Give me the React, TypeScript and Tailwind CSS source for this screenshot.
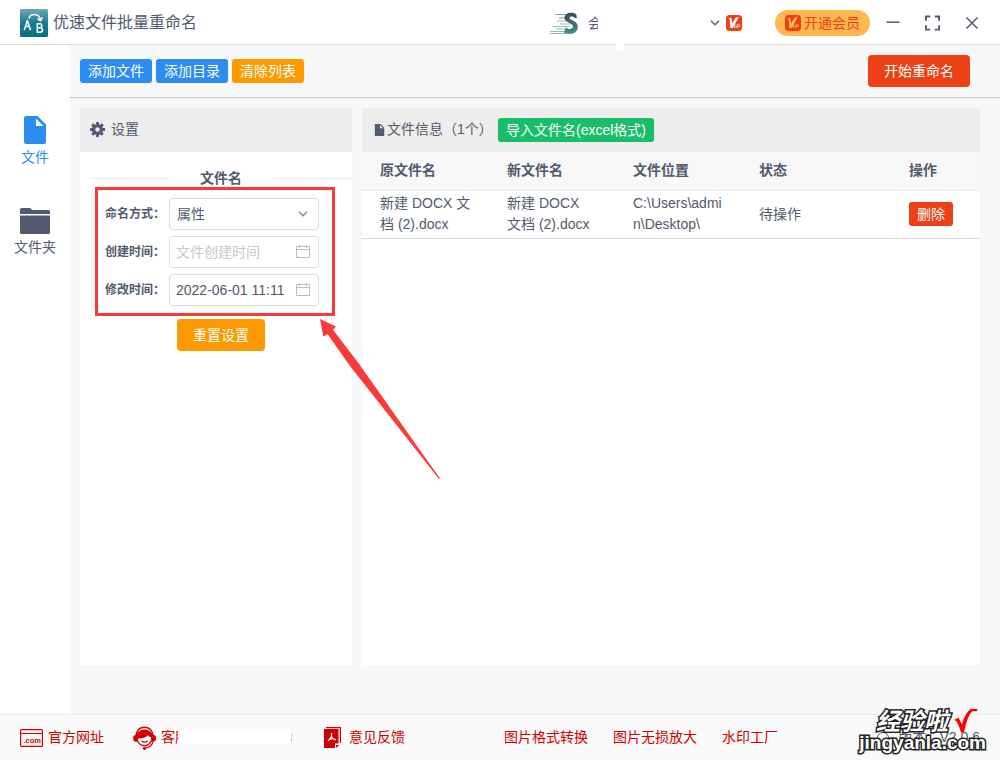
import type { ReactNode } from "react";

const files = [
  {
    source: "新建 DOCX 文档 (2).docx",
    target: "新建 DOCX 文档 (2).docx",
    location: "C:\\Users\\admin\\Desktop\\",
    status: "待操作",
  },
];

const toolLinks = ["图片格式转换", "图片无损放大", "水印工厂"];

function AppLogo() {
  return (
    <svg className="size-7 shrink-0" viewBox="0 0 28 28" aria-hidden="true">
      <defs>
        <linearGradient id="logo-bg" x1="0" y1="0" x2="0" y2="1">
          <stop offset="0" stopColor="#6fa6b5" />
          <stop offset="0.5" stopColor="#177d92" />
          <stop offset="1" stopColor="#087084" />
        </linearGradient>
      </defs>
      <rect width="28" height="28" rx="1.5" fill="url(#logo-bg)" />
      <g fill="none" stroke="#fff" strokeWidth="1.5" strokeLinecap="round" strokeLinejoin="round">
        <path d="M4.400 20.500 7.400 11.500 10.400 20.500M5.500 17.500h3.800" />
        <path d="M17.300 14.800v8.400h3a2.200 2.200 0 0 0 0-4.400h-3M17.300 14.800h2.500a2 2 0 0 1 0 4" />
        <path d="M9 9.200C10.200 4.600 18.500 3.600 20.600 10.600M18 10l2.800 1.800 1.200-2.800" />
      </g>
    </svg>
  );
}

function SpeedLogo() {
  return (
    <svg className="h-[24px] w-[30px] shrink-0" viewBox="0 0 30 24" aria-hidden="true">
      <defs>
        <linearGradient id="speed" x1="0" y1="0" x2="0" y2="1">
          <stop offset="0" stopColor="#354b59" />
          <stop offset="1" stopColor="#438f91" />
        </linearGradient>
      </defs>
      <g strokeWidth="1.2" fill="none">
        <path d="M5 3.500h12M9 7h7" stroke="#8b9aa3" />
        <path d="M7 10h10M10 13h10" stroke="#a9bcc1" />
        <path d="M3 15.500h16M6 18h12" stroke="#96bcbf" />
        <path d="M0 20.500h17M0 22.500h17" stroke="#8cbdbd" />
      </g>
      <path
        d="M26.500 7.500C27.500 4 25.500 1.800 21.500 1.800c-4 0-7 2-7 5.200 0 2.700 2.300 3.800 4.800 5 2 1 3.700 1.800 3.700 3.500 0 1.600-1.600 2.500-3.500 2.500-1.700 0-3-.7-3.500-1.800L14 21.500c1.500 1 3.500 1.400 5.500 1.400 5 0 8.300-2.800 8.300-7 0-3.300-2.300-4.900-4.800-6.100-2-.9-3.500-1.500-3.500-2.700 0-1 .9-1.700 2.200-1.700 1 0 1.800.3 2.100 1.100Z"
        fill="url(#speed)"
      />
    </svg>
  );
}

function VipBadge({ ink }: { ink: string }) {
  return (
    <svg className="size-4 shrink-0" viewBox="0 0 16 16" aria-hidden="true">
      <rect width="16" height="16" rx="3.5" fill="#ed4014" />
      <path d="M2.300 3.200 5.400 2.800 6.100 8.500 9.700 2.500 12.800 2.300 6.800 13H4.400L3.700 4.600Z" fill={ink} />
      <path d="M9 9.500 8.600 13M10.800 13l.4-3.300h1.500a1 1 0 0 1 0 2h-1.500" fill="none" stroke={ink} strokeWidth="1" />
    </svg>
  );
}

function FileIcon({ className }: { className: string }) {
  return (
    <svg className={className} viewBox="0 0 22 28" fill="currentColor" aria-hidden="true">
      <path d="M2 0h11.500L22 8.500V26a2 2 0 0 1-2 2H2a2 2 0 0 1-2-2V2a2 2 0 0 1 2-2Zm10 2.500V10h7.500Z" fillRule="evenodd" />
    </svg>
  );
}

function FolderIcon() {
  return (
    <svg className="h-[26px] w-[30px]" viewBox="0 0 30 26" fill="currentColor" aria-hidden="true">
      <path d="M0 6V1.500Q0 0 1.500 0H10l2.500 2h16Q30 2 30 3.500V6Z" />
      <path d="M0 7.500h30v17q0 1.500-1.500 1.500h-27Q0 26 0 24.500Z" />
    </svg>
  );
}

function GearIcon() {
  return (
    <svg className="size-[15px]" viewBox="0 0 16 16" fill="none" stroke="currentColor" aria-hidden="true">
      <circle cx="8" cy="8" r="4.200" strokeWidth="3.600" />
      <path
        d="M8 0v3M8 13v3M0 8h3M13 8h3M2.300 2.300l2.200 2.200M11.500 11.500l2.200 2.200M2.300 13.700l2.200-2.200M11.500 4.500l2.200-2.200"
        strokeWidth="3"
      />
    </svg>
  );
}

function ChevronIcon({ className }: { className: string }) {
  return (
    <svg className={className} viewBox="0 0 10 6" fill="none" stroke="currentColor" strokeWidth="1.300" aria-hidden="true">
      <path d="m1 .8 4 4 4-4" />
    </svg>
  );
}

function CalendarIcon() {
  return (
    <svg className="pointer-events-none absolute top-[9px] right-[9px] h-[13px] w-[14px] text-[#b9bdc6]" viewBox="0 0 14 13" fill="none" stroke="currentColor" aria-hidden="true">
      <path d="M.5 1.500h13v11H.5ZM.5 4.500h13M3.500 0v3M10.500 0v3" />
    </svg>
  );
}

function WebsiteIcon() {
  return (
    <svg className="h-[18px] w-[23px] shrink-0" viewBox="0 0 23 18" aria-hidden="true">
      <rect x=".6" y=".6" width="21.800" height="16.800" rx="1" fill="none" stroke="currentColor" strokeWidth="1.200" />
      <path d="M1 4.500h21" stroke="currentColor" />
      <text x="3.500" y="14" fontSize="7.500" fontWeight="700" fill="currentColor">.com</text>
    </svg>
  );
}

function SupportIcon() {
  return (
    <svg className="h-[24px] w-[23px] shrink-0" viewBox="0 0 23 24" aria-hidden="true">
      <path d="M3 9C4 3.800 7.500 1.200 11.500 1.200S19 3.800 20 9" fill="none" stroke="currentColor" strokeWidth="1.400" />
      <path
        d="M11.500 3.500C7 3.500 4 6.500 3.500 9H2.200Q0 9.500 0 12.300T2.500 15.800h1.800C5.500 18.500 8 20.300 11.500 20.300s6-1.800 7.200-4.500h1.800Q23 15.300 23 12.300T20.800 9h-1.300C19 6.500 16 3.500 11.500 3.500Zm3.500 5.800c.8 1.400 2 2 3.200 2.200 0 4.200-2.700 7.500-6.700 7.500s-6.700-2.900-6.700-6.500c4.200.1 8.200-.8 10.200-3.200Z"
        fill="currentColor"
        fillRule="evenodd"
      />
      <path d="M8.500 15q3 2.200 6 0M20 16q-1.500 5-7.500 6" fill="none" stroke="currentColor" strokeWidth="1.100" />
      <circle cx="11.500" cy="22.300" r="1.600" fill="currentColor" />
    </svg>
  );
}

function FeedbackIcon() {
  return (
    <svg className="h-[21px] w-[17px] shrink-0" viewBox="0 0 17 21" aria-hidden="true">
      <path d="M2 .6h14.400V16" fill="none" stroke="currentColor" strokeWidth="1.200" />
      <path d="M0 2h14.500v14.500H11V21H0Z" fill="currentColor" />
      <path d="M12 18h3l-3 3Z" fill="currentColor" />
      <path d="M7.500 6v3.500L4 14M7.500 9.500 9 11.500l3 1.500M5.200 12.300 9 11.500" fill="none" stroke="#fff" strokeWidth="1.200" />
    </svg>
  );
}

function Header() {
  return (
    <header className="relative flex h-[45px] shrink-0 items-center border-b border-[#dcdcdc] bg-white pt-px pr-[21px] pl-5">
      <AppLogo />
      <h1 className="ml-[5px] text-base">优速文件批量重命名</h1>
      <div className="ml-auto flex items-center">
        <SpeedLogo />
        <span className="ml-2 w-[10px] overflow-hidden text-sm whitespace-nowrap">会员</span>
        <button type="button" className="ml-[112px] flex items-center gap-[6px]" aria-label="账户">
          <ChevronIcon className="h-[6px] w-[10px]" />
          <VipBadge ink="#ffffff" />
        </button>
      </div>
      <button type="button" className="ml-[33px] flex h-[26px] w-[95px] items-center justify-center gap-[3px] rounded-full bg-[#ffb74f] text-sm text-[#ed4014]">
        <VipBadge ink="#ffb74f" />
        开通会员
      </button>
      <div className="ml-4 flex items-center gap-[25px]">
        <button type="button" aria-label="最小化">
          <svg className="h-4 w-[14px]" viewBox="0 0 14 16" stroke="currentColor" strokeWidth="1.500" aria-hidden="true">
            <path d="M.5 7.200h13" />
          </svg>
        </button>
        <button type="button" aria-label="最大化">
          <svg className="h-4 w-[15px]" viewBox="0 0 16 16" fill="none" stroke="currentColor" strokeWidth="2" aria-hidden="true">
            <path d="M1 5.500V1h4.500M10.500 1H15v4.500M15 10.500V15h-4.500M5.500 15H1v-4.500" />
          </svg>
        </button>
        <button type="button" aria-label="关闭">
          <svg className="h-4 w-[14px]" viewBox="0 0 14 16" fill="none" stroke="currentColor" strokeWidth="1.500" aria-hidden="true">
            <path d="m1.500 2.500 11 11M12.500 2.500l-11 11" />
          </svg>
        </button>
      </div>
      <span className="absolute top-[43px] right-[376px] h-2 w-2 bg-white" />
    </header>
  );
}

function Sidebar() {
  return (
    <nav className="flex w-[70px] shrink-0 flex-col items-center bg-white pt-[71px]">
      <a href="#files" className="flex flex-col items-center gap-[3px] text-[#2d8cf0]">
        <FileIcon className="h-7 w-[22px]" />
        <span>文件</span>
      </a>
      <a href="#folders" className="mt-10 flex flex-col items-center gap-[3px]">
        <FolderIcon />
        <span>文件夹</span>
      </a>
    </nav>
  );
}

function Field({ id, label, children }: { id: string; label: string; children: ReactNode }) {
  return (
    <div className="flex items-center">
      <label htmlFor={id} className="w-16 shrink-0 text-xs font-bold whitespace-nowrap">{label}</label>
      <div className="relative w-[150px]">{children}</div>
    </div>
  );
}

function PointerArrow() {
  return (
    <svg className="pointer-events-none absolute top-[211px] left-[240px] h-[160px] w-[120px]" viewBox="0 0 120 160" aria-hidden="true">
      <path d="M0 0 16 7.500 13 10.800 38 43.500 120 159.500 119 160 30 47 7.500 15 3.300 17.500Z" fill="#fa3939" />
    </svg>
  );
}

function SettingsPanel() {
  return (
    <section className="relative flex w-[272px] shrink-0 flex-col bg-white">
      <h2 className="flex h-11 items-center gap-[6px] bg-[#ededed] px-[10px] pb-px">
        <GearIcon />
        设置
      </h2>
      <div className="mt-[18px] ml-[10px] flex items-center">
        <span className="h-px flex-1 bg-[#e8eaec]" />
        <h3 className="px-[31px] leading-[17px] font-bold">文件名</h3>
        <span className="h-px flex-1 bg-[#e8eaec]" />
      </div>
      <form className="px-[15px]">
        <div className="flex w-60 flex-col gap-[6px] border-[3px] border-[#fa3939] pt-2 pb-[7px] pl-[7px]">
          <Field id="mode" label="命名方式：">
            <select id="mode" className="block h-8 w-full appearance-none rounded-[4px] border border-[#dcdee2] bg-white px-[7px]">
              <option>属性</option>
            </select>
            <ChevronIcon className="pointer-events-none absolute top-[13px] right-[11px] h-[6px] w-[10px] text-[#808695]" />
          </Field>
          <Field id="created" label="创建时间：">
            <input id="created" type="text" placeholder="文件创建时间" className="block h-8 w-full rounded-[4px] border border-[#dcdee2] bg-white pr-6 pl-[6px] placeholder:text-[#c5c8ce]" />
            <CalendarIcon />
          </Field>
          <Field id="modified" label="修改时间：">
            <input id="modified" type="text" defaultValue="2022-06-01 11:11" className="block h-8 w-full rounded-[4px] border border-[#dcdee2] bg-white pr-6 pl-[6px]" />
            <CalendarIcon />
          </Field>
        </div>
        <button type="reset" className="mt-[3px] ml-[82px] block h-8 w-[88px] rounded-[4px] bg-[#ff9900] text-white">重置设置</button>
      </form>
      <PointerArrow />
    </section>
  );
}

function FilesPanel() {
  return (
    <section className="min-w-0 flex-1 bg-white">
      <div className="flex h-11 items-center bg-[#ededed] pl-3">
        <FileIcon className="h-3 w-[11px]" />
        <h2 className="ml-[2px] w-[105px] pb-px whitespace-nowrap">文件信息（1个）</h2>
        <button type="button" className="ml-[6px] h-6 w-[156px] rounded-[3px] bg-[#19be6b] text-white">导入文件名(excel格式)</button>
      </div>
      <table className="w-full table-fixed text-left">
        <thead>
          <tr className="h-[38px] border-b border-[#e8eaec] bg-[#f8f8f9]">
            <th className="w-[127px] px-[18px]">原文件名</th>
            <th className="w-[126px] px-[18px]">新文件名</th>
            <th className="w-[126px] px-[18px]">文件位置</th>
            <th className="px-[18px]">状态</th>
            <th className="w-[89px] px-[18px]">操作</th>
          </tr>
        </thead>
        <tbody>
          {files.map((file) => (
            <tr key={file.source} className="h-12 border-b border-[#dcdee2] break-all">
              <td className="px-[18px]">{file.source}</td>
              <td className="px-[18px]">{file.target}</td>
              <td className="px-[18px]">{file.location}</td>
              <td className="px-[18px]">{file.status}</td>
              <td className="pl-[18px]">
                <button type="button" className="block h-6 w-11 rounded-[3px] bg-[#ed4014] text-white">删除</button>
              </td>
            </tr>
          ))}
        </tbody>
      </table>
    </section>
  );
}

function Watermark() {
  return (
    <div className="pointer-events-none absolute right-[14px] bottom-[9px] flex flex-col items-end font-bold text-white [paint-order:stroke_fill] [-webkit-text-stroke:3px_#222222]">
      <div className="flex items-start gap-[6px] pr-2">
        <span className="text-2xl leading-[26px] italic">经验啦</span>
        <svg className="h-6 w-6" viewBox="0 0 24 24" aria-hidden="true">
          <path d="M0 11 4.500 8.500 8 15.500C10 8 13 3 16.500 0H23.500L23 2.200H18C14 7 12 14 10 23.500H7C5.500 18 3.500 13.500 2.200 12Z" fill="#ff0000" stroke="none" />
        </svg>
      </div>
      <span className="text-[19px] leading-4">jingyanla.com</span>
    </div>
  );
}

function Footer() {
  return (
    <footer className="relative flex h-[46px] shrink-0 items-center border-t border-[#e8eaec] bg-[#fafafa] pr-5 pl-5 text-[#d00000]">
      <a href="#website" className="flex items-center gap-[5px]">
        <WebsiteIcon />
        官方网址
      </a>
      <a href="#support" className="ml-[29px] flex items-center">
        <SupportIcon />
        <span className="ml-[5px] w-[17px] overflow-hidden whitespace-nowrap">客服</span>
        <span className="h-[13px] w-[113px] bg-white" />
        <span className="h-3 w-px overflow-hidden text-xs leading-3">8</span>
      </a>
      <a href="#feedback" className="ml-8 flex items-center gap-2">
        <FeedbackIcon />
        意见反馈
      </a>
      <div className="ml-auto flex gap-[25px]">
        {toolLinks.map((link) => (
          <a key={link} href="#tools">{link}</a>
        ))}
      </div>
      <span className="ml-[99px] flex w-[103px] items-center justify-between text-[#515a6e]">
        <span className="size-3 rounded-full border border-[#515a6e]" />
        <span>版本:</span>
        <span>V2.0.6</span>
      </span>
      <Watermark />
    </footer>
  );
}

export default function App() {
  return (
    <div className="flex min-h-screen flex-col bg-[#f5f7f9] font-['Liberation_Sans','Noto_Sans_CJK_SC',sans-serif] text-sm leading-[21px] text-[#515a6e]">
      <Header />
      <div className="flex flex-1">
        <Sidebar />
        <main className="flex min-w-0 flex-1 flex-col">
          <div className="flex h-[53px] items-center gap-1 border-b border-[#c5c8ce] px-[10px] text-white">
            <button type="button" className="h-6 w-[72px] rounded-[3px] bg-[#2d8cf0]">添加文件</button>
            <button type="button" className="h-6 w-[72px] rounded-[3px] bg-[#2d8cf0]">添加目录</button>
            <button type="button" className="h-6 w-[72px] rounded-[3px] bg-[#ff9900]">清除列表</button>
            <button type="button" className="mr-5 ml-auto h-8 w-[102px] rounded-[4px] bg-[#ed4014]">开始重命名</button>
          </div>
          <div className="flex flex-1 gap-[10px] pt-[10px] pr-5 pb-[49px] pl-[10px]">
            <SettingsPanel />
            <FilesPanel />
          </div>
        </main>
      </div>
      <Footer />
    </div>
  );
}
